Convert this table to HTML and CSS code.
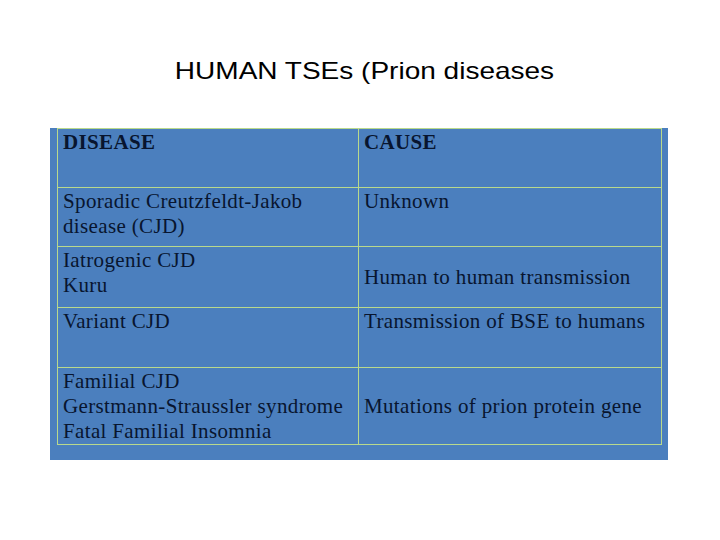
FILE: index.html
```html
<!DOCTYPE html>
<html>
<head>
<meta charset="utf-8">
<link rel="stylesheet" href="styles.css">
</head>
<body>
<h1 class="title"><span class="title-text">HUMAN TSEs (Prion diseases</span></h1>
<div class="panel">
  <table class="tse">
    <tr class="r1">
      <th class="top">DISEASE</th>
      <th class="top">CAUSE</th>
    </tr>
    <tr class="r2">
      <td class="top">Sporadic Creutzfeldt-Jakob<br>disease (CJD)</td>
      <td class="top">Unknown</td>
    </tr>
    <tr class="r3">
      <td class="top">Iatrogenic CJD<br>Kuru</td>
      <td class="mid">Human to human transmission</td>
    </tr>
    <tr class="r4">
      <td class="top">Variant CJD</td>
      <td class="top">Transmission of BSE to humans</td>
    </tr>
    <tr class="r5">
      <td class="top">Familial CJD<br>Gerstmann-Straussler syndrome<br>Fatal Familial Insomnia</td>
      <td class="mid">Mutations of prion protein gene</td>
    </tr>
  </table>
</div>
</body>
</html>
```
FILE: styles.css
```css
html, body {
  margin: 0;
  padding: 0;
  background: #ffffff;
}
body {
  width: 720px;
  height: 540px;
  overflow: hidden;
}
.title {
  margin: 57px 0 0 0;
  padding-left: 8px;
  font-family: "Liberation Sans", Arial, sans-serif;
  font-weight: normal;
  font-size: 24px;
  line-height: 28px;
  color: #000000;
  text-align: center;
}
.title-text {
  display: inline-block;
  transform: scaleX(1.167);
  transform-origin: center;
}
.panel {
  margin: 43px 0 0 50px;
  width: 604px;
  padding: 0 7px 15px 7px;
  background: #4b7fbe;
}
.tse {
  width: 605px;
  border-collapse: collapse;
  font-family: "Liberation Serif", "Times New Roman", serif;
  font-size: 21px;
  letter-spacing: 0.35px;
  line-height: 25px;
  color: #08152f;
}
.tse th, .tse td {
  border: 1px solid #b9d98c;
  padding: 1px 5px 0 5px;
  text-align: left;
  white-space: nowrap;
}
.tse th { font-weight: bold; }
.tse th:first-child, .tse td:first-child { width: 290px; }
.top { vertical-align: top; }
.mid { vertical-align: middle; }
.r1 { height: 59px; }
.r2 { height: 59px; }
.r3 { height: 61px; }
.r4 { height: 60px; }
.r5 { height: 76px; }
```
